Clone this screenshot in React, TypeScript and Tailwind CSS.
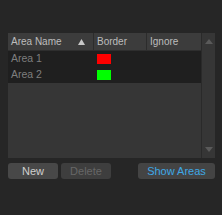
import React from "react";

const areas = [
  { name: "Area 1", color: "bg-[#ff0000]" },
  { name: "Area 2", color: "bg-[#00ff00]" },
];

export default function App() {
  return (
    <div
      className="w-[222px] h-[215px] bg-[#262626] pt-[33px] pl-[8px] pr-[7px] flex flex-col"
      style={{ fontFamily: '"Liberation Sans", Arial, sans-serif' }}
    >
      <div className="flex h-[125px]">
        <div className="flex-1 flex flex-col bg-[#363636]">
          <div className="flex h-[18px] bg-[#3c3c3c] text-[10px] text-[#bdbdbd] border-b border-[#2e2e2e]">
            <div className="w-[86px] flex items-center justify-between pl-[3px] pr-[8px] border-r border-[#2c2c2c]">
              <span>Area Name</span>
              <svg width="7" height="6" viewBox="0 0 7 6">
                <path d="M3.5 0 L7 6 L0 6 Z" fill="#c8c8c8" />
              </svg>
            </div>
            <div className="w-[53px] flex items-center pl-[3px] border-r border-[#2c2c2c]">Border</div>
            <div className="flex-1 flex items-center pl-[3px]">Ignore</div>
          </div>
          {areas.map((a) => (
            <div key={a.name} className="flex h-[16px] bg-[#1f1f1f] text-[10.5px] text-[#7e7e7e]">
              <div className="w-[86px] flex items-center pl-[3px]">{a.name}</div>
              <div className="w-[53px] flex items-center pl-[3px]">
                <div className={`w-[14px] h-[10px] ${a.color}`} />
              </div>
              <div className="flex-1" />
            </div>
          ))}
        </div>
        <div className="w-[14px] bg-[#363636] flex flex-col justify-between items-center py-[6px] border-l border-[#2a2a2a]">
          <svg width="8" height="5" viewBox="0 0 8 5">
            <path d="M4 0 L8 5 L0 5 Z" fill="#5a5a5a" />
          </svg>
          <svg width="8" height="5" viewBox="0 0 8 5">
            <path d="M0 0 L8 0 L4 5 Z" fill="#5a5a5a" />
          </svg>
        </div>
      </div>
      <div className="flex items-center mt-[5px] h-[16px] text-[11px]">
        <button className="w-[50px] h-[16px] rounded-[3px] bg-[#484848] text-[#cfcfcf] leading-none">New</button>
        <button className="w-[50px] h-[16px] ml-[3px] rounded-[3px] bg-[#3e3e3e] text-[#676767] leading-none">Delete</button>
        <div className="flex-1" />
        <button className="w-[77px] h-[16px] rounded-[3px] bg-[#444444] text-[#3ea8e6] leading-none">Show Areas</button>
      </div>
    </div>
  );
}
